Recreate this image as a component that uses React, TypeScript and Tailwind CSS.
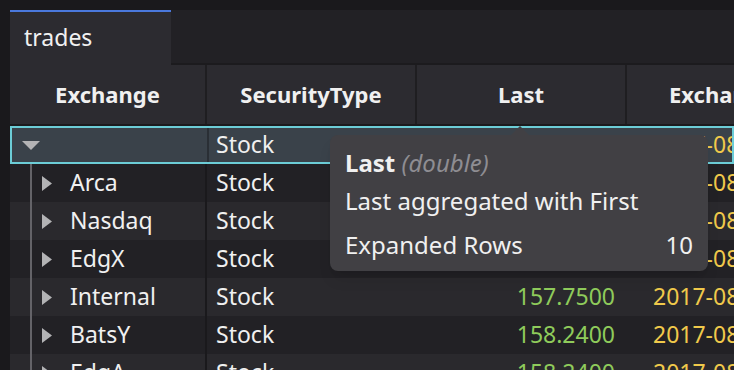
import React from 'react';

interface Row {
  name: string;
  type: string;
  last: string;
  date: string;
}

const ROWS: Row[] = [
  { name: 'Arca', type: 'Stock', last: '157.2500', date: '2017-08-21 09:30:01.000' },
  { name: 'Nasdaq', type: 'Stock', last: '157.2600', date: '2017-08-21 09:30:01.000' },
  { name: 'EdgX', type: 'Stock', last: '157.2500', date: '2017-08-21 09:30:01.000' },
  { name: 'Internal', type: 'Stock', last: '157.7500', date: '2017-08-21 09:30:01.000' },
  { name: 'BatsY', type: 'Stock', last: '158.2400', date: '2017-08-21 09:30:01.000' },
  { name: 'EdgA', type: 'Stock', last: '158.2400', date: '2017-08-21 09:30:01.000' },
];

const FONT = { fontFamily: '"Noto Sans", "Open Sans", sans-serif' };

const CaretRight = () => (
  <svg width="10" height="15" viewBox="0 0 10 15" className="shrink-0">
    <polygon points="0,0 10,7.5 0,15" fill="#b3b3b5" />
  </svg>
);

const CaretDown = () => (
  <svg width="18" height="9" viewBox="0 0 18 9" className="shrink-0">
    <polygon points="0,0 18,0 9,9" fill="#b3b3b5" />
  </svg>
);

export default function App() {
  return (
    <div className="w-[734px] h-[370px] overflow-hidden bg-[#1a191c] pt-[10px] pl-[10px] text-[#f0f0f0]" style={FONT}>
      {/* Tab bar */}
      <div className="flex h-[55px] bg-[#222125]">
        <div className="w-[161px] border-t-2 border-[#4a78dc] bg-[#2c2b30] pl-[14px] flex items-center text-[23px] leading-none pb-[2px]">
          trades
        </div>
        <div className="flex-1 border-b-2 border-[#1c1b1e]" />
      </div>

      {/* Grid */}
      <div className="relative">
        {/* Header */}
        <div className="grid grid-cols-[197px_210px_210px_1fr] h-[61px] bg-[#2c2b30] border-b-2 border-[#1c1b1e] text-[22px] font-bold">
          <div className="flex items-center justify-center border-r-2 border-[#1f1e21]">Exchange</div>
          <div className="flex items-center justify-center border-r-2 border-[#1f1e21]">SecurityType</div>
          <div className="flex items-center justify-center border-r-2 border-[#1f1e21]">Last</div>
          <div className="flex items-center pl-[42px] whitespace-nowrap overflow-hidden">Exchange Timestamp</div>
        </div>

        {/* Selected parent row */}
        <div className="grid grid-cols-[197px_210px_210px_1fr] h-[38px] bg-[#3a424a] border-2 border-[#6ccdd7] text-[23px] leading-none">
          <div className="flex items-center pl-[10px] border-r-2 border-[#2a2f35]">
            <CaretDown />
          </div>
          <div className="flex items-center pl-[7px] pb-[2px]">Stock</div>
          <div className="flex items-center justify-end pr-[12px] pb-[2px] text-[#8fcb5b]">157.2500</div>
          <div className="flex items-center pl-[24px] pb-[2px] text-[#f0c94b] whitespace-nowrap overflow-hidden">2017-08-21 09:30:01.000</div>
        </div>

        {/* Child rows */}
        <div className="relative">
          <div className="absolute left-[20px] top-0 bottom-0 w-[2px] bg-[#646368]" />
          {ROWS.map((row, i) => (
            <div
              key={row.name}
              className={`grid grid-cols-[197px_210px_210px_1fr] h-[38px] text-[23px] leading-none ${
                i % 2 === 0 ? 'bg-[#222125]' : 'bg-[#2a292d]'
              }`}
            >
              <div className="flex items-center pl-[32px] gap-[18px] border-r-2 border-[#1a191c]">
                <CaretRight />
                <span className="pb-[2px]">{row.name}</span>
              </div>
              <div className="flex items-center pl-[9px] pb-[2px]">{row.type}</div>
              <div className="flex items-center justify-end pr-[12px] pb-[2px] text-[#8fcb5b]">{row.last}</div>
              <div className="flex items-center pl-[26px] pb-[2px] text-[#f0c94b] whitespace-nowrap overflow-hidden">{row.date}</div>
            </div>
          ))}
        </div>

        {/* Tooltip */}
        <div className="absolute left-[320px] top-[70px] w-[378px]">
          <svg width="20" height="10" viewBox="0 0 20 10" className="absolute left-[180px] -top-[9px]">
            <polygon points="0,10 10,0 20,10" fill="#414044" />
          </svg>
          <div className="rounded-[8px] bg-[#414044] px-[15px] pt-[9px] pb-[7px] text-[24px] leading-[38px] shadow-lg">
            <div>
              <span className="font-bold">Last</span>{' '}
              <span className="italic text-[#8e8d92]">(double)</span>
            </div>
            <div>Last aggregated with First</div>
            <div className="flex justify-between mt-[6px]">
              <span>Expanded Rows</span>
              <span>10</span>
            </div>
          </div>
        </div>
      </div>
    </div>
  );
}
